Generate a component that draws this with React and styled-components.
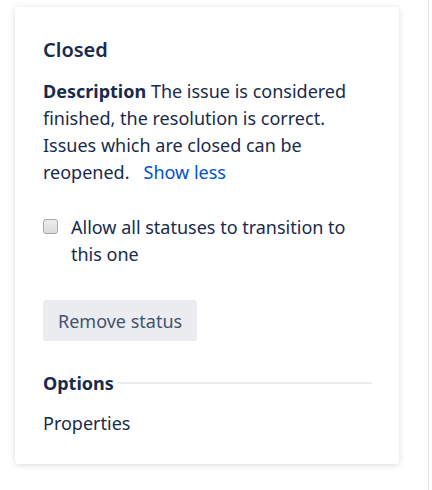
import React, { useState } from 'react';
import styled, { createGlobalStyle } from 'styled-components';

const GlobalStyle = createGlobalStyle`
  html, body {
    margin: 0;
    padding: 0;
    background: #fff;
  }
  body {
    font-family: "Noto Sans", "Open Sans", sans-serif;
    color: #172b4d;
  }
`;

const Page = styled.div`
  display: flex;
  width: 432px;
  height: 490px;
  box-sizing: border-box;
`;

const Column = styled.div`
  width: 429px;
  padding: 7px 29px 0 15px;
  box-sizing: border-box;
  border-right: 1px solid #e4e4e4;
`;

const Card = styled.div`
  background: #fff;
  border-radius: 4px;
  box-shadow: 0 1px 6px rgba(9, 30, 66, 0.16);
  padding: 31px 27px 29px 28px;
`;

const Title = styled.h2`
  margin: 0 0 16px;
  font-size: 20px;
  font-weight: 600;
  line-height: 24px;
`;

const Description = styled.p`
  margin: 0;
  font-size: 18px;
  line-height: 27px;
`;

const Strong = styled.strong`
  font-weight: 700;
`;

const Link = styled.a`
  color: #0052cc;
  text-decoration: none;
  margin-left: 14px;
  cursor: pointer;
`;

const CheckRow = styled.label`
  display: flex;
  align-items: flex-start;
  gap: 13px;
  margin-top: 28px;
  font-size: 18px;
  line-height: 27px;
  cursor: pointer;
`;

const Box = styled.input`
  appearance: none;
  flex: none;
  width: 15px;
  height: 15px;
  margin: 5px 0 0;
  border: 1px solid #a8a8a8;
  border-radius: 3px;
  background: linear-gradient(#ececec, #dcdcdc);
  box-sizing: border-box;
  &:checked {
    background: #0052cc;
    border-color: #0052cc;
  }
`;

const Button = styled.button`
  margin-top: 32px;
  height: 41px;
  padding: 0 15px;
  border: none;
  border-radius: 3px;
  background: #ebecf0;
  color: #42526e;
  font-family: inherit;
  font-size: 18px;
  cursor: pointer;
`;

const SectionHead = styled.div`
  display: flex;
  align-items: center;
  gap: 4px;
  margin-top: 30px;
  font-size: 18px;
  font-weight: 700;
  line-height: 24px;
  &::after {
    content: '';
    flex: 1;
    height: 2px;
    background: #ebecf0;
  }
`;

const Item = styled.div`
  margin-top: 16px;
  font-size: 18px;
  line-height: 24px;
`;

export default function App() {
  const [allowAll, setAllowAll] = useState(false);
  return (
    <Page>
      <GlobalStyle />
      <Column>
        <Card>
          <Title>Closed</Title>
          <Description>
            <Strong>Description</Strong> The issue is considered finished, the
            resolution is correct. Issues which are closed can be reopened.
            <Link>Show less</Link>
          </Description>
          <CheckRow>
            <Box
              type="checkbox"
              checked={allowAll}
              onChange={(e) => setAllowAll(e.target.checked)}
            />
            <span>Allow all statuses to transition to this one</span>
          </CheckRow>
          <Button>Remove status</Button>
          <SectionHead>Options</SectionHead>
          <Item>Properties</Item>
        </Card>
      </Column>
    </Page>
  );
}
